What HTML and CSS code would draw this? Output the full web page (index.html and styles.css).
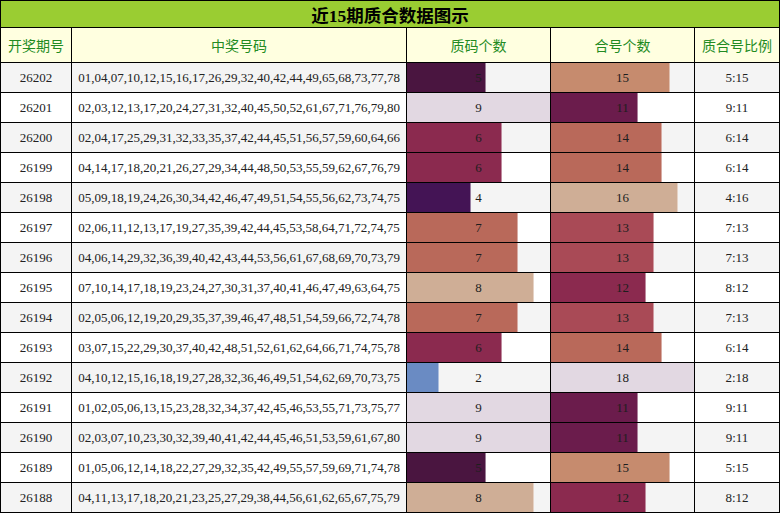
FILE: index.html
```html
<!DOCTYPE html>
<html lang="zh">
<head>
<meta charset="utf-8">
<title>近15期质合数据图示</title>
<link rel="stylesheet" href="styles.css">
</head>
<body>
<div class="board">
  <div class="title">近15期质合数据图示</div>
  <div class="head">开奖期号</div>
  <div class="head">中奖号码</div>
  <div class="head">质码个数</div>
  <div class="head">合号个数</div>
  <div class="head">质合号比例</div>

  <div class="c alt">26202</div><div class="c nums alt">01,04,07,10,12,15,16,17,26,29,32,40,42,44,49,65,68,73,77,78</div>
  <div class="c bar alt"><span class="fill v5" style="width:55.556%"></span><span class="lbl">5</span></div>
  <div class="c bar alt"><span class="fill v15" style="width:83.333%"></span><span class="lbl">15</span></div>
  <div class="c alt">5:15</div>

  <div class="c">26201</div><div class="c nums">02,03,12,13,17,20,24,27,31,32,40,45,50,52,61,67,71,76,79,80</div>
  <div class="c bar"><span class="fill v9" style="width:100%"></span><span class="lbl">9</span></div>
  <div class="c bar"><span class="fill v11" style="width:61.111%"></span><span class="lbl">11</span></div>
  <div class="c">9:11</div>

  <div class="c alt">26200</div><div class="c nums alt">02,04,17,25,29,31,32,33,35,37,42,44,45,51,56,57,59,60,64,66</div>
  <div class="c bar alt"><span class="fill v6" style="width:66.667%"></span><span class="lbl">6</span></div>
  <div class="c bar alt"><span class="fill v14" style="width:77.778%"></span><span class="lbl">14</span></div>
  <div class="c alt">6:14</div>

  <div class="c">26199</div><div class="c nums">04,14,17,18,20,21,26,27,29,34,44,48,50,53,55,59,62,67,76,79</div>
  <div class="c bar"><span class="fill v6" style="width:66.667%"></span><span class="lbl">6</span></div>
  <div class="c bar"><span class="fill v14" style="width:77.778%"></span><span class="lbl">14</span></div>
  <div class="c">6:14</div>

  <div class="c alt">26198</div><div class="c nums alt">05,09,18,19,24,26,30,34,42,46,47,49,51,54,55,56,62,73,74,75</div>
  <div class="c bar alt"><span class="fill v4" style="width:44.444%"></span><span class="lbl">4</span></div>
  <div class="c bar alt"><span class="fill v16" style="width:88.889%"></span><span class="lbl">16</span></div>
  <div class="c alt">4:16</div>

  <div class="c">26197</div><div class="c nums">02,06,11,12,13,17,19,27,35,39,42,44,45,53,58,64,71,72,74,75</div>
  <div class="c bar"><span class="fill v7" style="width:77.778%"></span><span class="lbl">7</span></div>
  <div class="c bar"><span class="fill v13" style="width:72.222%"></span><span class="lbl">13</span></div>
  <div class="c">7:13</div>

  <div class="c alt">26196</div><div class="c nums alt">04,06,14,29,32,36,39,40,42,43,44,53,56,61,67,68,69,70,73,79</div>
  <div class="c bar alt"><span class="fill v7" style="width:77.778%"></span><span class="lbl">7</span></div>
  <div class="c bar alt"><span class="fill v13" style="width:72.222%"></span><span class="lbl">13</span></div>
  <div class="c alt">7:13</div>

  <div class="c">26195</div><div class="c nums">07,10,14,17,18,19,23,24,27,30,31,37,40,41,46,47,49,63,64,75</div>
  <div class="c bar"><span class="fill v8" style="width:88.889%"></span><span class="lbl">8</span></div>
  <div class="c bar"><span class="fill v12" style="width:66.667%"></span><span class="lbl">12</span></div>
  <div class="c">8:12</div>

  <div class="c alt">26194</div><div class="c nums alt">02,05,06,12,19,20,29,35,37,39,46,47,48,51,54,59,66,72,74,78</div>
  <div class="c bar alt"><span class="fill v7" style="width:77.778%"></span><span class="lbl">7</span></div>
  <div class="c bar alt"><span class="fill v13" style="width:72.222%"></span><span class="lbl">13</span></div>
  <div class="c alt">7:13</div>

  <div class="c">26193</div><div class="c nums">03,07,15,22,29,30,37,40,42,48,51,52,61,62,64,66,71,74,75,78</div>
  <div class="c bar"><span class="fill v6" style="width:66.667%"></span><span class="lbl">6</span></div>
  <div class="c bar"><span class="fill v14" style="width:77.778%"></span><span class="lbl">14</span></div>
  <div class="c">6:14</div>

  <div class="c alt">26192</div><div class="c nums alt">04,10,12,15,16,18,19,27,28,32,36,46,49,51,54,62,69,70,73,75</div>
  <div class="c bar alt"><span class="fill v2" style="width:22.222%"></span><span class="lbl">2</span></div>
  <div class="c bar alt"><span class="fill v18" style="width:100%"></span><span class="lbl">18</span></div>
  <div class="c alt">2:18</div>

  <div class="c">26191</div><div class="c nums">01,02,05,06,13,15,23,28,32,34,37,42,45,46,53,55,71,73,75,77</div>
  <div class="c bar"><span class="fill v9" style="width:100%"></span><span class="lbl">9</span></div>
  <div class="c bar"><span class="fill v11" style="width:61.111%"></span><span class="lbl">11</span></div>
  <div class="c">9:11</div>

  <div class="c alt">26190</div><div class="c nums alt">02,03,07,10,23,30,32,39,40,41,42,44,45,46,51,53,59,61,67,80</div>
  <div class="c bar alt"><span class="fill v9" style="width:100%"></span><span class="lbl">9</span></div>
  <div class="c bar alt"><span class="fill v11" style="width:61.111%"></span><span class="lbl">11</span></div>
  <div class="c alt">9:11</div>

  <div class="c">26189</div><div class="c nums">01,05,06,12,14,18,22,27,29,32,35,42,49,55,57,59,69,71,74,78</div>
  <div class="c bar"><span class="fill v5" style="width:55.556%"></span><span class="lbl">5</span></div>
  <div class="c bar"><span class="fill v15" style="width:83.333%"></span><span class="lbl">15</span></div>
  <div class="c">5:15</div>

  <div class="c alt">26188</div><div class="c nums alt">04,11,13,17,18,20,21,23,25,27,29,38,44,56,61,62,65,67,75,79</div>
  <div class="c bar alt"><span class="fill v8" style="width:88.889%"></span><span class="lbl">8</span></div>
  <div class="c bar alt"><span class="fill v12" style="width:66.667%"></span><span class="lbl">12</span></div>
  <div class="c alt">8:12</div>
</div>
</body>
</html>
```

FILE: styles.css
```css
html, body {
  margin: 0;
  padding: 0;
  background: #ffffff;
}

.board {
  display: grid;
  grid-template-columns: 70px 334px 143px 143px 84px;
  grid-template-rows: 26px 34px repeat(15, 29px);
  gap: 1px;
  padding: 1px;
  background: #000000;
  width: 780px;
  box-sizing: border-box;
  font-family: "Liberation Serif", "Noto Sans CJK SC", serif;
  font-size: 13px;
  color: #222222;
}

.title {
  grid-column: 1 / -1;
  background: #9acd32;
  color: #000000;
  font-weight: bold;
  font-size: 17.5px;
  display: flex;
  align-items: center;
  justify-content: center;
}

.head {
  background: #ffffe0;
  color: #228b22;
  font-family: "Noto Sans CJK SC", sans-serif;
  font-size: 14px;
  display: flex;
  align-items: center;
  justify-content: center;
}

.c {
  background: #ffffff;
  display: flex;
  align-items: center;
  justify-content: center;
  white-space: nowrap;
}

.c.alt {
  background: #f4f4f4;
}

.bar {
  display: grid;
  grid-template-columns: 100%;
  grid-template-rows: 100%;
  justify-items: start;
  align-items: stretch;
}

.fill {
  grid-area: 1 / 1;
  height: 100%;
  box-sizing: border-box;
  border-right: 1px solid rgba(255, 255, 255, 0.45);
}

.lbl {
  grid-area: 1 / 1;
  justify-self: stretch;
  align-self: center;
  text-align: center;
  color: #1e1e1e;
}

.v2 { background: #6a8bc3; }
.v4 { background: #441455; }
.v5 { background: #4a1540; }
.v6 { background: #8b2a4f; }
.v7 { background: #b9695a; }
.v8 { background: #cfae96; }
.v9 { background: #e2d8e2; border-right: none; }
.v11 { background: #6b1c4c; }
.v12 { background: #8b2a4f; }
.v13 { background: #a94a56; }
.v14 { background: #b9695a; }
.v15 { background: #c68b6e; }
.v16 { background: #cfae96; }
.v18 { background: #e2d8e2; border-right: none; }
```
